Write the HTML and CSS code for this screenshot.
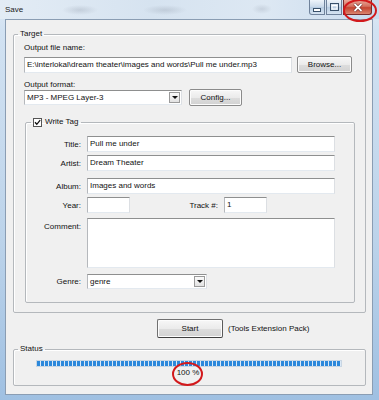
FILE: index.html
```html
<!DOCTYPE html>
<html lang="en">
<head>
    <meta charset="UTF-8">
    <title>Save</title>
    <link rel="stylesheet" href="styles.css">
</head>
<body>
    <div class="window">
        <div class="titlebar">
            <span class="title">Save</span>
            <div class="caption-buttons">
                <span class="cap-btn cap-min">
                    <svg width="8" height="4" viewBox="0 0 8 4"><rect x="0.5" y="0.5" width="7" height="3" fill="#fff" stroke="#39506a"/></svg>
                </span>
                <span class="cap-btn cap-max">
                    <svg width="9" height="8" viewBox="0 0 9 8"><rect x="0.5" y="0.5" width="8" height="7" fill="none" stroke="#39506a"/><rect x="2" y="2.5" width="5" height="3.5" fill="none" stroke="#fff"/></svg>
                </span>
                <span class="cap-btn cap-close">
                    <svg width="10" height="9" viewBox="0 0 10 9"><path d="M1.5 1 L8.5 8 M8.5 1 L1.5 8" stroke="#5a1a1a" stroke-width="3"/><path d="M1.5 1 L8.5 8 M8.5 1 L1.5 8" stroke="#fff" stroke-width="1.8"/></svg>
                </span>
            </div>
        </div>

        <div class="client">
            <fieldset class="group target">
                <legend>Target</legend>
                <div class="field-label">Output file name:</div>
                <div class="row file-row">
                    <div class="textbox path">E:\interlokal\dream theater\images and words\Pull me under.mp3</div>
                    <button class="btn browse">Browse...</button>
                </div>
                <div class="field-label format-label">Output format:</div>
                <div class="row format-row">
                    <div class="combo format"><span>MP3 - MPEG Layer-3</span><span class="combo-arrow"></span></div>
                    <button class="btn config">Config...</button>
                </div>

                <fieldset class="group tag">
                    <legend>
                        <span class="check">
                            <svg width="9" height="9" viewBox="0 0 9 9"><rect x="0.5" y="0.5" width="8" height="8" fill="#fff" stroke="#555"/><path d="M2 4.3 L3.8 6.3 L7.2 2.2" fill="none" stroke="#111" stroke-width="1.3"/></svg>
                        </span>Write Tag
                    </legend>
                    <div class="tag-grid">
                        <label class="tag-label">Title:</label>
                        <div class="textbox">Pull me under</div>

                        <label class="tag-label row-artist">Artist:</label>
                        <div class="textbox row-artist">Dream Theater</div>

                        <label class="tag-label row-album">Album:</label>
                        <div class="textbox row-album">Images and words</div>

                        <label class="tag-label row-year">Year:</label>
                        <div class="year-row row-year">
                            <div class="textbox small"></div>
                            <label class="track-label">Track #:</label>
                            <div class="textbox small">1</div>
                        </div>

                        <label class="tag-label comment-label">Comment:</label>
                        <div class="textbox comment"></div>

                        <label class="tag-label row-genre">Genre:</label>
                        <div class="combo genre row-genre"><span>genre</span><span class="combo-arrow"></span></div>
                    </div>
                </fieldset>
            </fieldset>

            <div class="start-row">
                <button class="btn start">Start</button>
                <span class="note">(Tools Extension Pack)</span>
            </div>

            <fieldset class="group status">
                <legend>Status</legend>
                <div class="progress"></div>
                <div class="percent">100 %</div>
            </fieldset>
        </div>

        <span class="mark mark-close"></span>
        <span class="mark mark-percent"></span>
    </div>
</body>
</html>
```

FILE: styles.css
```css
* {
    box-sizing: border-box;
}
body {
    margin: 0;
    font-family: "Liberation Sans", Arial, sans-serif;
    font-size: 8px;
    color: #111;
}
.window {
    position: relative;
    width: 379px;
    height: 400px;
    overflow: hidden;
    background: linear-gradient(to bottom, #dfe9f4 0, #d2e2f2 30px, #bcd3ea 60%, #9fc0e2 100%);
}

/* title bar, with the blurred window behind the glass */
.titlebar {
    height: 19px;
    display: flex;
    align-items: flex-start;
    justify-content: space-between;
    background:
        radial-gradient(ellipse 18px 5px at 80px 10px, rgba(150, 160, 175, 0.35), transparent),
        radial-gradient(ellipse 22px 5px at 165px 10px, rgba(150, 160, 175, 0.35), transparent),
        radial-gradient(ellipse 10px 5px at 262px 9px, rgba(150, 160, 175, 0.3), transparent),
        linear-gradient(to right, #e3ecf5 0, #d6e3f0 40%, #dde8f3 70%, #c9dbee 100%);
}
.title {
    padding: 4px 0 0 5px;
    line-height: 12px;
    color: #222;
}
.caption-buttons {
    display: flex;
    gap: 1px;
    margin-right: 7px;
}
.cap-btn {
    display: flex;
    align-items: center;
    justify-content: center;
    height: 15px;
    border: 1px solid #6f829b;
    border-top: none;
    background: linear-gradient(to bottom, #eef4fa, #c9d9ea 50%, #b7cce2 51%, #d5e3f1);
}
.cap-min {
    width: 16px;
    border-radius: 0 0 0 3px;
}
.cap-min svg {
    margin-top: 5px;
}
.cap-max {
    width: 16px;
}
.cap-close {
    width: 29px;
    border-color: #7a2c2c;
    border-radius: 0 0 3px 0;
    background: linear-gradient(to bottom, #e9a99b, #d4705e 45%, #c5432f 55%, #d9846f);
}

/* client area */
.client {
    width: 368px;
    height: 376px;
    margin-left: 5px;
    border: 1px solid #8a9db3;
    background: #f0f0f0;
}

/* group boxes */
.group {
    margin: 0;
    border: 1px solid #b4b8bc;
    border-radius: 2px;
    box-shadow: inset 1px 1px 0 #fff;
}
.group legend {
    line-height: 12px;
    padding: 0 2px;
}
.target {
    width: 353px;
    margin: 8px 0 0 7px;
    padding: 2px 0 9px 10px;
}
.target > legend {
    margin-left: -6px;
}
.field-label {
    line-height: 12px;
}
.format-label {
    margin-top: 6px;
}
.row {
    display: flex;
    align-items: center;
}
.file-row {
    margin-top: 2px;
    gap: 5px;
}
.format-row {
    margin-top: -2px;
    gap: 7px;
}

/* inputs */
.textbox {
    height: 16px;
    padding-left: 2px;
    line-height: 14px;
    background: #fff;
    border: 1px solid;
    border-color: #8e8f8f #dcdfe3 #e3e9ef #b5b8bc;
    white-space: nowrap;
    overflow: hidden;
}
.path {
    width: 268px;
}
.combo {
    display: flex;
    align-items: center;
    justify-content: space-between;
    height: 15px;
    padding: 0 1px 0 2px;
    background: #fff;
    border: 1px solid;
    border-color: #8e8f8f #dcdfe3 #e3e9ef #b5b8bc;
}
.combo-arrow {
    position: relative;
    width: 11px;
    height: 11px;
    border: 1px solid #9a9a9a;
    background: linear-gradient(to bottom, #fafafa, #e2e2e2);
}
.combo-arrow::after {
    content: "";
    position: absolute;
    left: 2px;
    top: 3px;
    border-left: 3px solid transparent;
    border-right: 3px solid transparent;
    border-top: 3px solid #111;
}
.format {
    width: 158px;
}
.genre {
    width: 120px;
}

/* buttons */
.btn {
    font: inherit;
    color: #111;
    padding: 0;
    border: 1px solid #8b8b8b;
    border-radius: 2px;
    background: linear-gradient(to bottom, #f7f7f7, #ebebeb 50%, #dddddd 51%, #d2d2d2);
    box-shadow: inset 0 0 0 1px #fcfcfc;
}
.browse {
    width: 55px;
    height: 17px;
}
.config {
    width: 53px;
    height: 17px;
}

/* write tag */
.tag {
    width: 330px;
    margin: 10px 0 0 1px;
    padding: 8px 0 13px 0;
}
.tag > legend {
    display: flex;
    align-items: center;
    margin-left: 5px;
}
.check {
    display: flex;
    margin-right: 3px;
}
.tag-grid {
    display: grid;
    grid-template-columns: 55px 248px;
    column-gap: 6px;
    align-items: center;
}
.tag-label {
    text-align: right;
}
.row-artist {
    margin-top: 3px;
}
.row-album {
    margin-top: 7px;
}
.row-year {
    margin-top: 3px;
}
.year-row {
    display: flex;
    align-items: center;
}
.small {
    width: 43px;
}
.track-label {
    width: 94px;
    padding-right: 6px;
    text-align: right;
}
.comment-label {
    align-self: start;
    margin-top: 9px;
}
.comment {
    height: 50px;
    margin-top: 5px;
}
.row-genre {
    margin-top: 6px;
}

/* start */
.start-row {
    display: flex;
    align-items: center;
    gap: 5px;
    margin-top: 6px;
    padding-left: 151px;
}
.start {
    width: 66px;
    height: 19px;
    border-color: #707070 #5a5a5a #3f3f3f #707070;
}

/* status */
.status {
    width: 353px;
    margin: 5px 0 0 7px;
    padding: 5px 0 6px 22px;
}
.status > legend {
    margin-left: -18px;
}
.progress {
    width: 306px;
    height: 7px;
    border: 1px solid #c9d6e3;
    background: repeating-linear-gradient(to right, #2c88db 0, #2c88db 3px, #dbe9f7 3px, #dbe9f7 4px);
}
.percent {
    width: 306px;
    line-height: 12px;
    text-align: center;
    padding-right: 2px;
}

/* red circles drawn over the shot */
.mark {
    position: absolute;
    border: 2px solid #d2191c;
    border-radius: 50%;
}
.mark-close {
    left: 343px;
    top: -1px;
    width: 34px;
    height: 23px;
}
.mark-percent {
    left: 172px;
    top: 362px;
    width: 31px;
    height: 24px;
}
```
